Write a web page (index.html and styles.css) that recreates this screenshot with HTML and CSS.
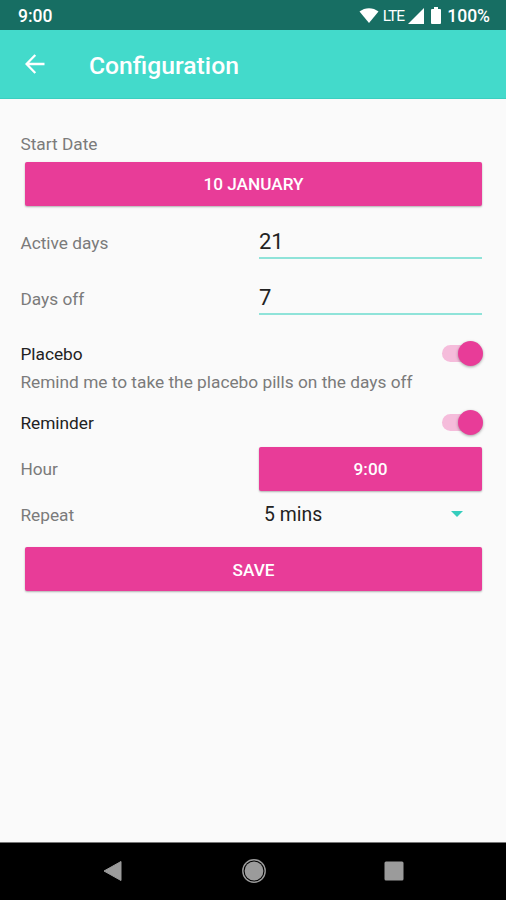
FILE: index.html
```html
<!DOCTYPE html>
<html lang="en">
<head>
    <meta charset="UTF-8">
    <meta name="viewport" content="width=device-width, initial-scale=1.0">
    <title>Configuration</title>
    <link rel="stylesheet" href="styles.css">
</head>
<body>

<div class="status-bar">
    <span class="clock">9:00</span>
    <svg class="wifi" width="20" height="17" viewBox="0 0 20 17"><path d="M0.5 4.500C6 0 14 0 19.500 4.500L10 16Z" fill="#fff"/></svg>
    <span class="lte">LTE</span>
    <svg class="signal" width="16" height="16" viewBox="0 0 16 16"><path d="M16 0V16H0Z" fill="#fff"/></svg>
    <svg class="battery" width="10" height="17" viewBox="0 0 10 17"><path d="M3 0h4v2h2q1 0 1 1v13q0 1-1 1H1q-1 0-1-1V3q0-1 1-1h2z" fill="#fff"/></svg>
    <span class="percent">100%</span>
</div>

<div class="app-bar">
    <svg class="back" width="20" height="20" viewBox="0 0 20 20"><path d="M19.500 10H2M10.300 1L1.500 10L10.300 19" fill="none" stroke="#fff" stroke-width="2.300"/></svg>
    <h1>Configuration</h1>
</div>

<div class="content">
    <label class="start-label">Start Date</label>
    <button class="btn wide">10 JANUARY</button>

    <div class="row field-row">
        <label>Active days</label>
        <div class="field">21</div>
    </div>
    <div class="row field-row">
        <label>Days off</label>
        <div class="field">7</div>
    </div>

    <div class="row switch-row placebo">
        <label>Placebo</label>
        <div class="switch"><div class="thumb"></div></div>
    </div>
    <p class="hint">Remind me to take the placebo pills on the days off</p>
    <div class="row switch-row reminder">
        <label>Reminder</label>
        <div class="switch"><div class="thumb"></div></div>
    </div>

    <div class="row hour-row">
        <label>Hour</label>
        <button class="btn">9:00</button>
    </div>
    <div class="row repeat-row">
        <label>Repeat</label>
        <div class="spinner">
            <span>5 mins</span>
            <svg width="12" height="6" viewBox="0 0 12 6"><path d="M0 0H12L6 6Z" fill="#35cdbd"/></svg>
        </div>
    </div>

    <button class="btn wide save">SAVE</button>
</div>

<div class="nav-bar">
    <svg width="20" height="22" viewBox="0 0 20 22"><path d="M18 1.500V20.500L1 11Z" fill="#9b9b9b" stroke="#9b9b9b" stroke-linejoin="round"/></svg>
    <svg width="24" height="24" viewBox="0 0 24 24"><circle cx="12" cy="12" r="11.200" fill="none" stroke="#9b9b9b" stroke-width="1.400"/><circle cx="12" cy="12" r="9.400" fill="#9b9b9b"/></svg>
    <svg width="20" height="20" viewBox="0 0 20 20"><rect x="0.500" y="0.500" width="19" height="19" rx="1.500" fill="#9b9b9b"/></svg>
</div>

</body>
</html>
```

FILE: styles.css
```css
* {
    margin: 0;
    padding: 0;
    box-sizing: border-box;
}
body {
    font-family: Roboto, "Liberation Sans", sans-serif;
    font-size: 17.3px;
    color: #7b7b7b;
    background-color: #fafafa;
    display: flex;
    flex-direction: column;
    height: 100vh;
    overflow: hidden;
}
.status-bar {
    height: 30px;
    padding: 1px 16px 0 18px;
    background-color: #176e63;
    color: #fff;
    display: flex;
    align-items: center;
    font-size: 17.5px;
    font-weight: 500;
}
.clock {
    flex: 1;
}
.lte {
    font-size: 15.5px;
    font-weight: 400;
    letter-spacing: -0.9px;
    margin-left: 4px;
}
.signal {
    margin-left: 4px;
}
.battery {
    margin-left: 7px;
}
.percent {
    margin-left: 6px;
}
.app-bar {
    height: 69px;
    padding-left: 25px;
    background-color: #43dacb;
    border-bottom: 1px solid #3acfc0;
    color: #fff;
    display: flex;
    align-items: center;
}
.app-bar h1 {
    margin-left: 44px;
    padding-top: 2px;
    font-size: 24.7px;
    font-weight: 500;
}
.content {
    flex: 1;
    padding: 29px 24px 0 20px;
    display: flex;
    flex-direction: column;
}
.content label, .hint {
    padding-left: 0.4px;
}
.start-label {
    height: 34px;
    line-height: 32px;
}
.btn {
    height: 44px;
    border: none;
    border-radius: 2px;
    background-color: #e83c98;
    box-shadow: 0 1px 2px rgba(0, 0, 0, 0.3);
    color: #fff;
    font-family: inherit;
    font-size: 17.2px;
    font-weight: 500;
}
.wide {
    margin-left: 5px;
}
.save {
    padding-top: 1px;
}
.row {
    display: grid;
    grid-template-columns: 239px 1fr;
    align-items: center;
}
.field-row {
    height: 56px;
}
.wide + .field-row {
    margin-top: 9px;
}
.field {
    height: 35px;
    margin-top: -4px;
    line-height: 35px;
    border-bottom: 2px solid #8fe3d9;
    font-size: 22px;
    color: #222;
}
.switch-row {
    grid-template-columns: 1fr 40px;
    height: 28px;
    color: #222;
}
.switch-row label {
    padding-top: 1px;
}
.placebo {
    margin-top: 12px;
}
.hint {
    height: 28px;
    line-height: 31px;
    white-space: nowrap;
}
.reminder {
    margin-top: 13px;
}
.switch {
    width: 37px;
    height: 17px;
    border-radius: 9px;
    background-color: #f5bcdb;
    display: flex;
    align-items: center;
    justify-content: flex-end;
}
.thumb {
    width: 25px;
    height: 25px;
    margin-right: -4px;
    flex-shrink: 0;
    border-radius: 50%;
    background-color: #e83c98;
    box-shadow: 0 1px 3px rgba(0, 0, 0, 0.35);
}
.hour-row {
    margin-top: 11px;
}
.repeat-row {
    height: 48px;
    margin-bottom: 8px;
}
.spinner {
    padding: 0 19px 2px 5px;
    display: flex;
    align-items: center;
    justify-content: space-between;
    font-size: 19.4px;
    color: #222;
}
.nav-bar {
    height: 58px;
    border-top: 1px solid #777;
    background-color: #000;
    padding: 0 102px 2px 103px;
    display: flex;
    align-items: center;
    justify-content: space-between;
}
```
